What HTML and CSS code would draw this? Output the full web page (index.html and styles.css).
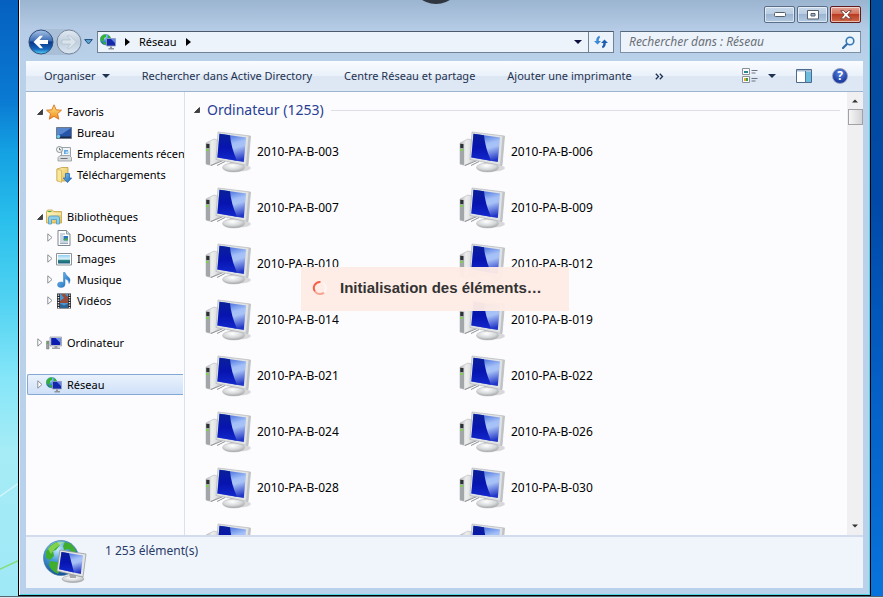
FILE: index.html
```html
<!DOCTYPE html>
<html lang="fr">
<head>
<meta charset="utf-8">
<meta name="viewport" content="width=device-width, initial-scale=1">
<title>Réseau</title>
<link rel="stylesheet" href="styles.css">
</head>
<body>
<svg class="defs" aria-hidden="true">
  <defs>
    <linearGradient id="glare" x1=".3" y1="0" x2=".6" y2="1"><stop offset="0" stop-color="#3560d8"/><stop offset=".4" stop-color="#a4c0f8"/><stop offset=".55" stop-color="#a8c2f6"/><stop offset="1" stop-color="#2034c6"/></linearGradient>
    <linearGradient id="deep" x1="0" y1="0" x2="0" y2="1"><stop offset="0" stop-color="#0a2098"/><stop offset=".5" stop-color="#0714b0"/><stop offset="1" stop-color="#1228cc"/></linearGradient>
    <linearGradient id="metal" x1="0" y1="0" x2="1" y2="0"><stop offset="0" stop-color="#b4b8ba"/><stop offset=".4" stop-color="#eeefef"/><stop offset="1" stop-color="#cfd1d2"/></linearGradient>
    <radialGradient id="foot" cx=".45" cy=".3" r=".7"><stop offset="0" stop-color="#fff"/><stop offset=".6" stop-color="#d6d8d9"/><stop offset="1" stop-color="#a0a4a5"/></radialGradient>
    <radialGradient id="globe" cx=".4" cy=".25" r=".8"><stop offset="0" stop-color="#c8ecff"/><stop offset=".4" stop-color="#4b9fdc"/><stop offset="1" stop-color="#0d4790"/></radialGradient>
    <linearGradient id="orb" x1="0" y1="0" x2="0" y2="1"><stop offset="0" stop-color="#a8c4e6"/><stop offset=".45" stop-color="#3d6db4"/><stop offset=".5" stop-color="#0c3788"/><stop offset=".8" stop-color="#1768bd"/><stop offset="1" stop-color="#58dcf8"/></linearGradient>
    <linearGradient id="orbOff" x1="0" y1="0" x2="0" y2="1"><stop offset="0" stop-color="#e2eaf3"/><stop offset=".5" stop-color="#c0cedd"/><stop offset="1" stop-color="#dbe6f1"/></linearGradient>
    <linearGradient id="gold" x1="0" y1="0" x2="0" y2="1"><stop offset="0" stop-color="#ffe98a"/><stop offset="1" stop-color="#f08a18"/></linearGradient>
    <linearGradient id="folder" x1="0" y1="0" x2="1" y2="1"><stop offset="0" stop-color="#fdf3b4"/><stop offset="1" stop-color="#dfba50"/></linearGradient>
    <linearGradient id="sky" x1="0" y1="0" x2="0" y2="1"><stop offset="0" stop-color="#8fd0f4"/><stop offset=".5" stop-color="#e2f4fa"/><stop offset=".6" stop-color="#2f8a86"/><stop offset="1" stop-color="#155c80"/></linearGradient>
    <linearGradient id="blue" x1="0" y1="0" x2="1" y2="1"><stop offset="0" stop-color="#7fc4f4"/><stop offset="1" stop-color="#1565b8"/></linearGradient>

    <symbol id="pc" viewBox="0 0 46 42">
      <ellipse cx="34" cy="37" rx="12" ry="3.500" fill="#000" opacity=".14"/>
      <path d="M1 12 9 8l7 2v19L6 34.500l-5-1.500Z" fill="url(#metal)" stroke="#b4b7b9" stroke-width=".6"/>
      <path d="M1 12l4 1v21l-4-1Z" fill="#a2a6a8"/><path d="M1.300 13h3v4h-3Z" fill="#2c3030"/><path d="M1.600 18h2v2h-2Z" fill="#6fe030"/>
      <path d="M6 34.500 18 29.500M12 34.500l8-4" stroke="#84888a" stroke-width=".9" fill="none"/>
      <path d="M26 30l8 1 1 4-11-1Z" fill="#b4b8ba"/>
      <ellipse cx="28.500" cy="36.500" rx="11" ry="4.500" fill="url(#foot)" stroke="#b4b7b9" stroke-width=".5"/>
      <path d="M13 1 45.500 5 43 34.500 11 28.500Z" fill="#e0e2e3" stroke="#abafb1" stroke-width=".6"/>
      <path d="M14.500 2.800 41 6.500 38.800 31 12.300 26.500Z" fill="url(#glare)"/>
      <path d="M14.500 2.800 25 4.200Q26 16 32 29.800L12.300 26.500Z" fill="url(#deep)"/>
      <path d="M43.500 5 45.500 5 43 34.500 41 34Z" fill="#c0c3c5"/>
    </symbol>
    <symbol id="globe-pc" viewBox="0 0 44 44">
      <circle cx="18" cy="19" r="17.500" fill="url(#globe)" stroke="#3c7394" stroke-width=".6"/>
      <path d="M3 13Q7 5 14 3l3 3-4 5-3 1 1 5-4 4-4-2ZM22 3q8 1 11 9l-3 3-4-5-5 1-1-4ZM7 22l7 1 4 5-3 7q-7-3-9-9ZM17 12l4 1 2 6-4 2-3-4Z" fill="#3fae2c"/>
      <path d="M5 10Q12 1 22 3 12 8 8 15Z" fill="#b9f06c" opacity=".55"/>
      <ellipse cx="30" cy="40" rx="11" ry="3.500" fill="url(#foot)" stroke="#999" stroke-width=".5"/>
      <path d="M26 34l7 1v4h-6Z" fill="#a4a8aa"/>
      <path d="M17 11 43 15 40 38 14 32Z" fill="#e2e4e5" stroke="#8e9294" stroke-width=".7"/>
      <path d="M18.500 13 40 16.500 37.800 35 16 30.200Z" fill="url(#glare)"/>
      <path d="M18.500 13 26 14.200 31 33.500 16 30.200Z" fill="url(#deep)"/>
    </symbol>
    <symbol id="net" viewBox="0 0 16 16">
      <circle cx="5.500" cy="5.500" r="5.300" fill="url(#globe)" stroke="#397790" stroke-width=".4"/>
      <path d="M1 3Q3 0 6 .5L6 3 4 4 4 6 2 8 .6 6ZM3 8l3 .5V10.500Q4 10.500 3 9ZM8 1q2 1 2.500 3L8 4Z" fill="#32b32a"/>
      <path d="M6.500 4.500h9v7.500h-9Z" fill="#1428ae" stroke="#98a4be" stroke-width=".8"/>
      <path d="M11 5l4 0v4Z" fill="#6488ec"/><path d="M10 12.500h2v1.500h2v1.500H8.500V14H10Z" fill="#8d9399"/>
    </symbol>
    <symbol id="small-pc" viewBox="0 0 16 16">
      <path d="M.5 6h2.500v8H.5Z" fill="#9aa09f" stroke="#6f7474" stroke-width=".5"/><path d="M1 7h1.500v2H1Z" fill="#54b045"/>
      <path d="M4 2h11.500v9H4Z" fill="#d4d7dc" stroke="#8e949c" stroke-width=".7"/>
      <path d="M5.200 3h9.200v7H5.200Z" fill="#0c1cb0"/><path d="M9.500 3h5v5Z" fill="#6c90f0"/>
      <path d="M8.500 11h3v1.500h2.500V14H6v-1.500h2.500Z" fill="#9da2a6"/>
    </symbol>
    <symbol id="star" viewBox="0 0 16 16"><path d="M8 .8l2.200 5 5.300.4-4 3.500 1.300 5.500L8 12.300 3.300 15.200 4.500 9.700.5 6.200l5.300-.4Z" fill="url(#gold)" stroke="#d9701c" stroke-width=".9" stroke-linejoin="round"/></symbol>
    <symbol id="desktop" viewBox="0 0 16 16"><path d="M.5 2.500h15v11H.5Z" fill="#2554a8" stroke="#6e7a8c"/><path d="M1 3h14L6 9 1 10Z" fill="#5786cc"/><path d="M1 11.500h14V13H1Z" fill="#1c2a44"/><circle cx="2.500" cy="11.500" r="1.700" fill="#6cd0f0"/></symbol>
    <symbol id="recent" viewBox="0 0 16 16"><path d="M5.500 1.500h9v9h-9Z" fill="#eef4f8" stroke="#9ba3a8"/><path d="M8 4h4v4H8Z" fill="#60a8e0"/><path d="M9.500 5.500h4v2h-4Z" fill="#c3dcf0"/><path d="M2 11.500l2-2h9.500l2 2v3.500H2Z" fill="#d8dcde" stroke="#92989b" stroke-width=".8"/><path d="M4.500 12.500h7" stroke="#6d7376"/><circle cx="3.500" cy="3.500" r="3" fill="#f2f5f5" stroke="#8a9294"/><path d="M3.500 1.800v2h1.700" stroke="#4d5659" fill="none" stroke-width=".8"/></symbol>
    <symbol id="download" viewBox="0 0 16 16"><path d="M1 2l5-1.500h6V14H1Z" fill="url(#folder)" stroke="#c29c3c" stroke-width=".8"/><path d="M1 2l4.500 1.500v12L1 13.500Z" fill="#f9e899" stroke="#c9a444" stroke-width=".6"/><path d="M9.500 6.500h4v4.500h2.200l-4.200 4.600-4.200-4.600h2.200Z" fill="url(#blue)" stroke="#1a62ae" stroke-width=".7"/></symbol>
    <symbol id="library" viewBox="0 0 16 16"><path d="M.5 2.500 1.500 1h5l1 1.500h8V14H.5Z" fill="url(#folder)" stroke="#c6a545" stroke-width=".8"/><path d="M1.500 2.500h4" stroke="#4fae4a"/><path d="M1 5h14" stroke="#fff8cf"/><path d="M2.500 15V9q0-2 2-2h7q2 0 2 2v6h-3v-4.500H5.500V15Z" fill="#8ecdea" stroke="#4e9dc4" stroke-width=".8"/></symbol>
    <symbol id="document" viewBox="0 0 16 16"><path d="M2 .5h8.500l3.500 3.500v11.500H2Z" fill="#fff" stroke="#7f878e"/><path d="M10.500.5V4H14" fill="#dce4ea" stroke="#7f878e" stroke-width=".8"/><path d="M4 4h5M4 6h3M4 8h3M4 10h3M4 12h8M4 13.500h8" stroke="#7b96b4" stroke-width=".8"/><path d="M7.500 6h4.500v4.500H7.500Z" fill="#2d74be"/><path d="M7.500 9l4.500-1v2.500H7.500Z" fill="#4ba85a"/></symbol>
    <symbol id="image" viewBox="0 0 16 16"><path d="M.5 2.500h15v11.500H.5Z" fill="#fff" stroke="#8c9297"/><path d="M2 4h12v8.500H2Z" fill="url(#sky)"/></symbol>
    <symbol id="music" viewBox="0 0 16 16"><path d="M7.500.5h1.500q.5 2.500 3.500 4.500 3 2.500.5 6.500.3-3.500-4-5V12.300q0 3.200-4 3.200-3.500 0-3.500-2.700 0-2.800 3.500-2.800 1.500 0 2.500.5Z" fill="url(#blue)" stroke="#287cc2" stroke-width=".5"/></symbol>
    <symbol id="video" viewBox="0 0 16 16"><path d="M1 .5h14v15H1Z" fill="#25272b"/><path d="M4 1h8v14H4Z" fill="#4a97cf"/><path d="M4 8l4-3 4 2v3H4ZM5 1h4l3 3v3L8 5Z" fill="#984c3c"/><path d="M4 10.500l4 2 4-2V15H4Z" fill="#2d6395"/><path d="M2.500 1.500v14M13.500 1.500v14" stroke="#f0f0f0" stroke-width="1.500" stroke-dasharray="1.300 1.200"/></symbol>
    <symbol id="closed" viewBox="0 0 6 9"><path d="M.8.8 5 4.500.8 8.200Z" fill="#fff" stroke="#8c9096"/></symbol>
    <symbol id="open" viewBox="0 0 6 6"><path d="M5.500.5v5h-5Z" fill="#404040" stroke="#202020" stroke-width=".7"/></symbol>
    <symbol id="down" viewBox="0 0 8 4"><path d="M0 0h8L4 4Z" fill="currentColor"/></symbol>
    <symbol id="right" viewBox="0 0 5 8"><path d="M0 0l5 4-5 4Z" fill="currentColor"/></symbol>
  </defs>
</svg>

<div class="window">
  <header class="titlebar">
    <button class="cap" aria-label="Réduire"><svg width="12" height="6" viewBox="0 0 12 6"><rect x=".5" y=".5" width="11" height="4" rx="1" fill="#fff" stroke="#555d68"/></svg></button>
    <button class="cap" aria-label="Agrandir"><svg width="12" height="10" viewBox="0 0 12 10"><path d="M.5.5h11v8.500H.5ZM4 3.500v2.500h4v-2.500Z" fill="#fff" fill-rule="evenodd" stroke="#555d68"/></svg></button>
    <button class="cap close" aria-label="Fermer"><svg width="12" height="10" viewBox="0 0 12 10"><path d="M.7.7h3L6 3 8.300.7h3L7.800 4.800l3.500 4h-3L6 6.500l-2.300 2.300h-3l3.500-4Z" fill="#fff" stroke="#5c3030" stroke-width=".8"/></svg></button>
  </header>

  <div class="navbar">
    <div class="history">
      <button class="orb" aria-label="Précédent"><svg width="26" height="26" viewBox="0 0 26 26"><circle cx="13" cy="13" r="12" fill="url(#orb)" stroke="#31517f"/><path d="M5.500 13 12 6.800h3L11.500 11H20v4h-8.500l3.500 4.200h-3Z" fill="#fff"/></svg></button>
      <button class="orb" aria-label="Suivant"><svg width="26" height="26" viewBox="0 0 26 26"><circle cx="13" cy="13" r="12" fill="url(#orbOff)" stroke="#77899d"/><path d="M20.500 13 14 6.800h-3l3.500 4.200H6v4h8.500L11 19.200h3Z" fill="#dbe4ec" stroke="#adbccb" stroke-width=".6"/></svg></button>
    </div>
    <button class="recent-pages" aria-label="Pages récentes"><svg width="9" height="6" viewBox="0 0 9 6"><path d="M.7.6h7.600L4.500 5Z" fill="#5fa6d8" stroke="#1f4a7c"/></svg></button>
    <div class="address">
      <div class="crumbs">
        <svg class="ico"><use href="#net"/></svg>
        <svg class="sep"><use href="#right"/></svg>
        <a href="#">Réseau</a>
        <svg class="sep"><use href="#right"/></svg>
      </div>
      <button class="drop" aria-label="Emplacements précédents"><svg width="8" height="4"><use href="#down"/></svg></button>
      <button class="refresh" aria-label="Actualiser"><svg width="14" height="14" viewBox="0 0 14 14"><path d="M0 6 2.200 6Q2 2 5.500.8L6 2.500Q4.500 3.500 4.700 6H7L3.500 9.500Z" fill="#3a8ad6"/><path d="M14 8h-2.200q.2 4-3.300 5.200L8 11.500Q9.500 10.500 9.300 8H7l3.500-3.500Z" fill="#1d5fae"/></svg></button>
    </div>
    <form class="search">
      <input type="search" aria-label="Rechercher dans : Réseau" placeholder="Rechercher dans : Réseau">
      <svg width="13" height="13" viewBox="0 0 13 13"><path d="M5.500 7.500 1 12" stroke="#2d6ca8" stroke-width="2.200" stroke-linecap="round"/><circle cx="8" cy="5" r="3.800" fill="#e9f4fc" stroke="#3878b4" stroke-width="1.600"/></svg>
    </form>
  </div>

  <div class="client">
    <div class="toolbar">
      <button class="organise">Organiser <svg width="8" height="4"><use href="#down"/></svg></button>
      <button>Rechercher dans Active Directory</button>
      <button>Centre Réseau et partage</button>
      <button>Ajouter une imprimante</button>
      <button class="more" aria-label="Autres commandes"><svg width="9" height="7" viewBox="0 0 9 7"><path d="M.8.700 3.500 3.500.8 6.300M4.800.700 7.500 3.500 4.800 6.300" fill="none" stroke="#1e2f50" stroke-width="1.300"/></svg></button>
      <div class="tools">
        <button class="view" aria-label="Affichage"><svg width="16" height="16" viewBox="0 0 16 16"><path d="M.5.5h7v6h-7ZM.5 8.500h7v6h-7Z" fill="#fff" stroke="#8a9096"/><path d="M2 3h4v2H2Z" fill="#2c8298"/><path d="M2 10h2v3H2Z" fill="#d8b040"/><path d="M4 10h2v3H4Z" fill="#3c9a48"/><path d="M9.500 2.500h6M9.500 5h4M9.500 10.500h6M9.500 13h4" stroke="#6a7286"/></svg> <svg width="8" height="4"><use href="#down"/></svg></button>
        <button aria-label="Volet de visualisation"><svg width="16" height="14" viewBox="0 0 16 14"><path d="M.5.5h15v13H.5Z" fill="#fff" stroke="#4d6a8c"/><path d="M1 1h14v1.500H1Z" fill="#a8bdd2"/><path d="M10 2.500h5V13h-5Z" fill="#6cbce0"/><path d="M9.500 2v11.500" stroke="#4d7a9c"/></svg></button>
        <button class="help" aria-label="Aide">?</button>
      </div>
    </div>

    <div class="panes">
      <nav class="tree">
        <a class="root" href="#"><svg class="tri-open"><use href="#open"/></svg><svg class="ico"><use href="#star"/></svg>Favoris</a>
        <a class="leaf" href="#"><i class="tri"></i><svg class="ico"><use href="#desktop"/></svg>Bureau</a>
        <a class="leaf" href="#"><i class="tri"></i><svg class="ico"><use href="#recent"/></svg>Emplacements récents</a>
        <a class="leaf last" href="#"><i class="tri"></i><svg class="ico"><use href="#download"/></svg>Téléchargements</a>
        <a class="root" href="#"><svg class="tri-open"><use href="#open"/></svg><svg class="ico"><use href="#library"/></svg>Bibliothèques</a>
        <a class="leaf" href="#"><svg class="tri"><use href="#closed"/></svg><svg class="ico"><use href="#document"/></svg>Documents</a>
        <a class="leaf" href="#"><svg class="tri"><use href="#closed"/></svg><svg class="ico"><use href="#image"/></svg>Images</a>
        <a class="leaf" href="#"><svg class="tri"><use href="#closed"/></svg><svg class="ico"><use href="#music"/></svg>Musique</a>
        <a class="leaf last" href="#"><svg class="tri"><use href="#closed"/></svg><svg class="ico"><use href="#video"/></svg>Vidéos</a>
        <a class="root last" href="#"><svg class="tri"><use href="#closed"/></svg><svg class="ico"><use href="#small-pc"/></svg>Ordinateur</a>
        <a class="root selected" href="#"><svg class="tri"><use href="#closed"/></svg><svg class="ico"><use href="#net"/></svg>Réseau</a>
      </nav>

      <main class="files">
        <h1 class="group"><svg class="tri-open"><use href="#open"/></svg><span>Ordinateur (1253)</span></h1>
        <ul class="items">
          <li><svg class="pc"><use href="#pc"/></svg>2010-PA-B-003</li>
          <li><svg class="pc"><use href="#pc"/></svg>2010-PA-B-006</li>
          <li><svg class="pc"><use href="#pc"/></svg>2010-PA-B-007</li>
          <li><svg class="pc"><use href="#pc"/></svg>2010-PA-B-009</li>
          <li><svg class="pc"><use href="#pc"/></svg>2010-PA-B-010</li>
          <li><svg class="pc"><use href="#pc"/></svg>2010-PA-B-012</li>
          <li><svg class="pc"><use href="#pc"/></svg>2010-PA-B-014</li>
          <li><svg class="pc"><use href="#pc"/></svg>2010-PA-B-019</li>
          <li><svg class="pc"><use href="#pc"/></svg>2010-PA-B-021</li>
          <li><svg class="pc"><use href="#pc"/></svg>2010-PA-B-022</li>
          <li><svg class="pc"><use href="#pc"/></svg>2010-PA-B-024</li>
          <li><svg class="pc"><use href="#pc"/></svg>2010-PA-B-026</li>
          <li><svg class="pc"><use href="#pc"/></svg>2010-PA-B-028</li>
          <li><svg class="pc"><use href="#pc"/></svg>2010-PA-B-030</li>
          <li><svg class="pc"><use href="#pc"/></svg></li>
          <li><svg class="pc"><use href="#pc"/></svg></li>
        </ul>
      </main>

      <div class="scrollbar">
        <svg width="6" height="4"><use href="#down"/></svg>
        <div class="thumb"></div>
        <svg width="6" height="4"><use href="#down"/></svg>
      </div>
    </div>

    <footer class="status"><svg class="globe"><use href="#globe-pc"/></svg><span>1 253 élément(s)</span></footer>
  </div>

  <div class="handle"></div>
  <div class="toast" role="status">
    <svg width="16" height="16" viewBox="0 0 16 16"><path d="M8.500 2A6 6 0 0 0 3 11.500" fill="none" stroke="#f4604a" stroke-width="2"/><path d="M3 11.500A6 6 0 0 0 12 12.500" fill="none" stroke="#f9a392" stroke-width="2"/><path d="M12 12.500A6 6 0 0 0 11 2.800" fill="none" stroke="#fff6f2" stroke-width="2"/></svg>
    <span>Initialisation des éléments…</span>
  </div>
</div>
<div class="taskbar"></div>
</body>
</html>
```
FILE: styles.css
```css
* { box-sizing: border-box; }

body {
  margin: 0;
  height: 100vh;
  overflow: hidden;
  display: flex;
  flex-direction: column;
  font: 12px/20px "Noto Sans", "Open Sans", sans-serif;
  color: #000;
  background:
    linear-gradient(145deg, transparent 48%, #fff9 50%, transparent 52%) 0 460px / 18px 60px no-repeat,
    linear-gradient(155deg, transparent 47%, #7fdc6a 50%, transparent 53%) 0 545px / 18px 40px no-repeat,
    linear-gradient(#0560bf, #0a7ad2 100px, #14a0e2 150px, #29bfec 220px, #50d2f2 300px, #86e6f8 380px, #a5ecf6 450px, #9fe8f6) 0 0 / 18px 100% no-repeat,
    linear-gradient(#044c9c, #0049a8 200px, #0561c8 400px, #0873dc);
}

.defs { position: absolute; width: 0; height: 0; }

button, input { font: inherit; color: inherit; padding: 0; margin: 0; border: 0; background: none; }
button { display: flex; align-items: center; justify-content: center; }
a { color: inherit; text-decoration: none; }
svg { flex: none; display: block; }
.ico { width: 16px; height: 16px; }

.window {
  position: relative;
  flex: 1;
  min-height: 0;
  overflow: hidden;
  margin: 0 12px 0 18px;
  padding: 0 7px;
  display: flex;
  flex-direction: column;
  border: 1px solid #000;
  border-top: 0;
  box-shadow: inset 1px 0 #eef6fc, inset -1px -1px #52d4e4;
  background: linear-gradient(#9bb4d0, #b6cce6 30px, #bad1ea 60px, #b9d1ea);
}

.titlebar { height: 28px; padding: 6px 2px 5px; display: flex; justify-content: flex-end; gap: 2px; }
.cap {
  width: 31px;
  border: 1px solid #5a6f8a;
  border-radius: 2px;
  box-shadow: inset 0 0 0 1px #ffffff90;
  background: linear-gradient(#c8d8ea, #b9cce2 48%, #9cb5d2 50%, #b4cae2);
}
.close { border-color: #5e1c1c; background: linear-gradient(#e4a494, #d2705c 48%, #b93c22 50%, #cf6a4a); }

.navbar { height: 33px; padding: 3px 2px 8px; display: flex; align-items: center; }
.history { display: flex; align-items: center; gap: 2px; border-radius: 13px; background: #a9bfd8; }
.recent-pages { width: 13px; height: 20px; margin-right: 2px; }
.address {
  flex: 1;
  height: 22px;
  display: flex;
  border: 1px solid #6f8296;
  border-top-color: #4c5a6a;
  background: #edf3fb;
}
.crumbs { flex: 1; display: flex; align-items: center; gap: 9px; padding-left: 2px; }
.crumbs a { font-size: 11px; }
.sep { width: 5px; height: 8px; }
.drop { width: 20px; color: #101040; }
.refresh { width: 25px; border-left: 1px solid #6f8296; }
.search {
  width: 241px;
  height: 22px;
  margin-left: 6px;
  padding: 0 5px 0 8px;
  display: flex;
  align-items: center;
  border: 1px solid #7c90a6;
  border-top-color: #56687c;
  background: #edf3fb;
}
.search input { flex: 1; min-width: 0; outline: 0; font-style: italic; }
.search input::placeholder { color: #6b7078; opacity: 1; }

.client { flex: 1; min-height: 0; margin-bottom: 7px; display: flex; flex-direction: column; }
.toolbar {
  height: 31px;
  flex: none;
  padding: 0 15px 0 18px;
  display: flex;
  gap: 32px;
  font-size: 11px;
  color: #1e3250;
  border-bottom: 1px solid #9cb4d0;
  background: linear-gradient(#fafcff, #eaf1fa 48%, #dde7f4 52%, #dfe9f6);
}
.organise { gap: 6px; }
.more { margin-left: -9px; }
.tools { margin-left: auto; display: flex; gap: 20px; }
.view { gap: 10px; }
.help {
  align-self: center;
  width: 16px;
  height: 16px;
  border-radius: 50%;
  border: 1px solid #8d99b8;
  background: radial-gradient(circle at 50% 30%, #5c86e0, #1c3ca4 70%);
  color: #fff;
  font-size: 12px;
  font-weight: 700;
  line-height: 14px;
}

.panes { flex: 1; min-height: 0; display: flex; background: #fcfcff; }
.tree { width: 159px; flex: none; padding: 9px 1px 0; overflow: hidden; font-size: 11px; border-right: 1px solid #d6e2f2; }
.tree a { height: 21px; display: flex; align-items: center; white-space: nowrap; gap: 5px; }
.tree .root { padding-left: 10px; }
.tree .leaf { padding-left: 20px; }
.tree .last { margin-bottom: 21px; }
.tree .ico { margin-left: -2px; }
.tri { width: 6px; height: 9px; flex: none; }
.tri-open { width: 6px; height: 6px; flex: none; }
.tree .selected { border: 1px solid #84a8d4; border-right: 0; border-radius: 2px 0 0 2px; padding-left: 9px; background: linear-gradient(#eaf2fc, #cfe0f8); }

.files { flex: 1; min-width: 0; overflow: hidden; padding: 7px 7px 0 9px; }
.group { margin: 0; height: 25px; padding-bottom: 3px; display: flex; align-items: center; gap: 7px; font-size: 14px; font-weight: 400; color: #2a3f94; }
.group::after { content: ""; flex: 1; height: 1px; background: #dedfe6; }
.items { margin: 0; padding: 0 0 0 11px; list-style: none; display: grid; grid-template-columns: repeat(auto-fill, 254px); grid-auto-rows: 56px; }
.items li { display: flex; align-items: center; gap: 6px; }
.pc { width: 46px; height: 42px; }

.scrollbar { width: 16px; flex: none; padding: 7px 0; display: flex; flex-direction: column; align-items: center; background: #f0eff1; color: #333; }
.scrollbar svg:first-child { transform: rotate(180deg); }
.scrollbar svg:last-child { margin-top: auto; }
.thumb { width: 15px; height: 16px; margin-top: 6px; border: 1px solid #a2a2a6; background: linear-gradient(90deg, #f6f6f6, #d4d4d8); }

.status { height: 53px; flex: none; padding: 2px 17px; display: flex; gap: 18px; border-top: 2px solid #d3dcec; background: #f0f5fc; color: #2a3a68; }
.globe { width: 44px; height: 44px; }
.status span { line-height: 24px; }

.handle { position: absolute; top: -48px; left: 391px; width: 52px; height: 52px; border-radius: 50%; background: #303640; }
.toast {
  position: absolute;
  top: 267px;
  left: 282px;
  width: 268px;
  height: 44px;
  padding: 0 11px 2px;
  display: flex;
  align-items: center;
  gap: 12px;
  background: #feece5f5;
  color: #333;
  font: 700 15px/20px "Liberation Sans", sans-serif;
  white-space: nowrap;
}

.taskbar { height: 2px; flex: none; background: #dfe6ec; border-top: 1px solid #5a6470; }
```
